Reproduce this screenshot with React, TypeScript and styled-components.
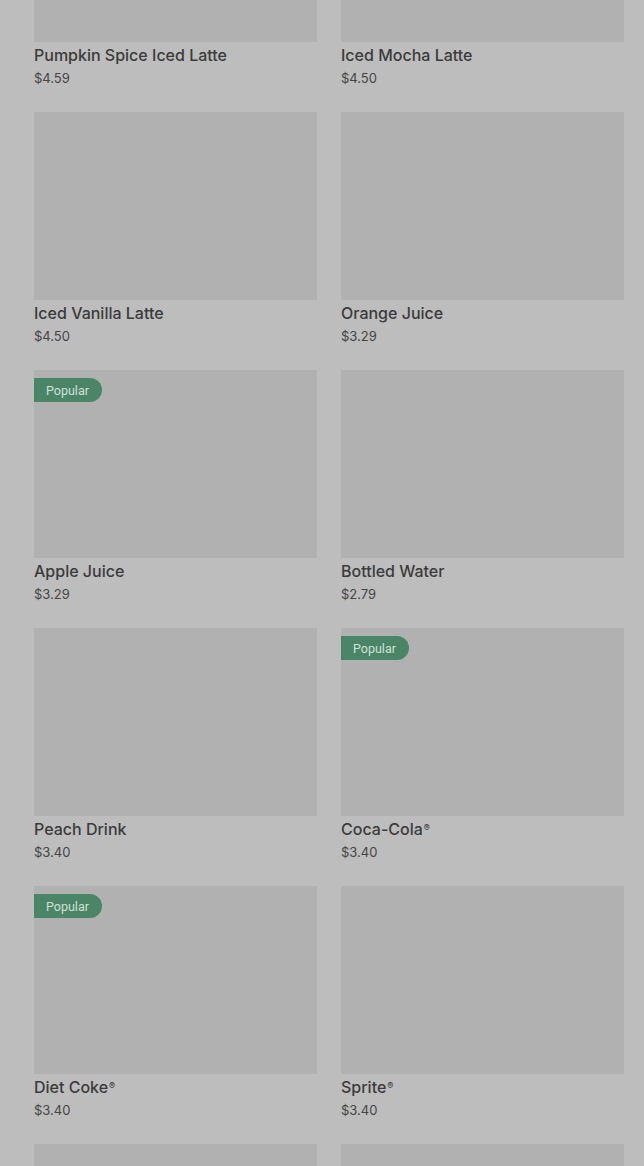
import React from "react";
import styled, { createGlobalStyle } from "styled-components";

const Global = createGlobalStyle`
  html, body { margin: 0; padding: 0; background: #bdbdbd; overflow: hidden; }
  body { font-family: Inter, Roboto, "Noto Sans", Arial, sans-serif; }
`;

const Page = styled.div`
  width: 644px;
  height: 1166px;
  overflow: hidden;
  background: #bdbdbd;
`;

const Grid = styled.div`
  display: grid;
  grid-template-columns: 283px 283px;
  column-gap: 24px;
  row-gap: 24px;
  padding: 0 20px 0 34px;
  margin-top: -146px;
`;

const Card = styled.div`
  display: flex;
  flex-direction: column;
`;

const Thumb = styled.div`
  position: relative;
  height: 188px;
  background: #b1b1b1;
`;

const Badge = styled.span`
  position: absolute;
  top: 8px;
  left: 0;
  height: 24px;
  display: flex;
  align-items: center;
  padding: 0 13px 0 12px;
  background: #4b8567;
  color: #cfe0d6;
  font-family: Roboto, Arial, sans-serif;
  font-size: 12.5px;
  border-radius: 0 12px 12px 0;
`;

const Name = styled.div`
  margin-top: 2px;
  font-size: 16px;
  line-height: 22px;
  font-weight: 500;
  color: #3b3b3b;
`;

const Reg = styled.sup`
  font-size: 9px;
  vertical-align: top;
  position: relative;
  top: -1px;
  margin-left: 1px;
`;

const Price = styled.div`
  margin-top: 2px;
  font-size: 13px;
  line-height: 20px;
  color: #454545;
`;

const items: { name: string; reg?: boolean; price: string; popular?: boolean }[] = [
  { name: "Pumpkin Spice Iced Latte", price: "$4.59" },
  { name: "Iced Mocha Latte", price: "$4.50" },
  { name: "Iced Vanilla Latte", price: "$4.50" },
  { name: "Orange Juice", price: "$3.29" },
  { name: "Apple Juice", price: "$3.29", popular: true },
  { name: "Bottled Water", price: "$2.79" },
  { name: "Peach Drink", price: "$3.40" },
  { name: "Coca-Cola", reg: true, price: "$3.40", popular: true },
  { name: "Diet Coke", reg: true, price: "$3.40", popular: true },
  { name: "Sprite", reg: true, price: "$3.40" },
  { name: "", price: "" },
  { name: "", price: "" },
];

export default function App() {
  return (
    <Page>
      <Global />
      <Grid>
        {items.map((it, i) => (
          <Card key={i}>
            <Thumb>{it.popular && <Badge>Popular</Badge>}</Thumb>
            {it.name && (
              <Name>
                {it.name}
                {it.reg && <Reg>®</Reg>}
              </Name>
            )}
            {it.price && <Price>{it.price}</Price>}
          </Card>
        ))}
      </Grid>
    </Page>
  );
}
